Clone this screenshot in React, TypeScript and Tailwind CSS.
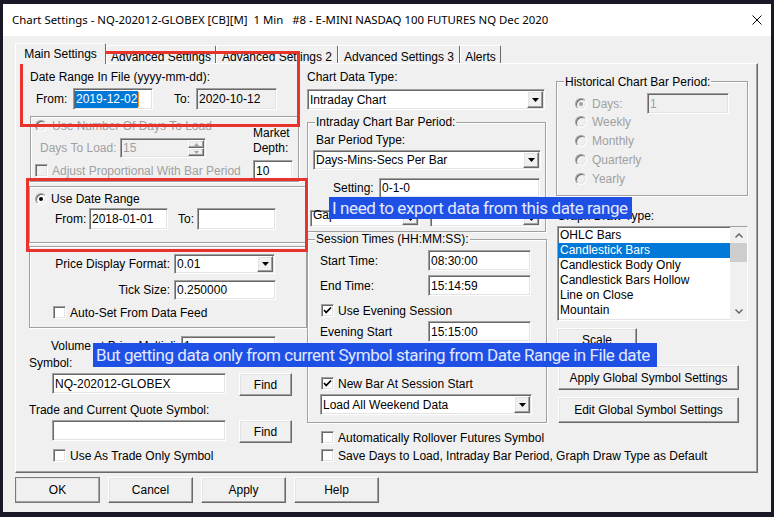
import React from "react";

const sunken =
  "border border-t-[#a0a0a0] border-l-[#a0a0a0] border-r-white border-b-white shadow-[inset_1px_1px_0_#696969,inset_-1px_-1px_0_#e3e3e3]";
const raised =
  "border border-t-white border-l-white border-r-[#696969] border-b-[#696969] shadow-[inset_-1px_-1px_0_#a0a0a0,inset_1px_1px_0_#e3e3e3] bg-[#f0f0f0]";
const etched = "border border-[#a0a0a0] shadow-[inset_1px_1px_0_#ffffff,1px_1px_0_#ffffff]";
const grayText = "text-[#a0a0a0]";

function TextBox({ cls, value = "", gray = false, dim = false }: { cls: string; value?: string; gray?: boolean; dim?: boolean }) {
  return (
    <div
      className={`${sunken} ${cls} ${gray ? "bg-[#f0f0f0]" : "bg-white"} ${dim ? grayText : ""} shrink-0 flex items-center pl-[2px] overflow-hidden whitespace-nowrap`}
    >
      {value}
    </div>
  );
}

function Arrow({ color = "#000" }: { color?: string }) {
  return (
    <svg width="7" height="4" viewBox="0 0 7 4">
      <polygon points="0,0 7,0 3.5,4" fill={color} />
    </svg>
  );
}

function Combo({ cls, value = "", textCls = "items-center" }: { cls: string; value?: string; textCls?: string }) {
  return (
    <div className={`${sunken} ${cls} bg-white shrink-0 flex items-stretch`}>
      <div className={`flex-1 flex ${textCls} pl-[2px] overflow-hidden whitespace-nowrap`}>{value}</div>
      <div className={`${raised} w-[16px] my-[1px] mr-[1px] flex items-center justify-center`}>
        <Arrow />
      </div>
    </div>
  );
}

function Button({ cls, children }: { cls: string; children: React.ReactNode }) {
  return <div className={`${raised} ${cls} shrink-0 flex items-center justify-center whitespace-nowrap`}>{children}</div>;
}

function Check({ checked = false, disabled = false }: { checked?: boolean; disabled?: boolean }) {
  return (
    <div className={`${sunken} w-[13px] h-[13px] shrink-0 ${disabled ? "bg-[#f0f0f0]" : "bg-white"} flex items-center justify-center`}>
      {checked && (
        <svg width="9" height="9" viewBox="0 0 9 9">
          <polyline points="1,4 3.2,6.5 8,1.5" fill="none" stroke="#000" strokeWidth="1.8" />
        </svg>
      )}
    </div>
  );
}

function Radio({ checked = false, disabled = false }: { checked?: boolean; disabled?: boolean }) {
  return (
    <div
      className={`w-[12px] h-[12px] shrink-0 rounded-full border border-t-[#a0a0a0] border-l-[#a0a0a0] border-r-white border-b-white shadow-[inset_1px_1px_0_#696969,inset_-1px_-1px_0_#e3e3e3] ${disabled ? "bg-[#f0f0f0]" : "bg-white"} flex items-center justify-center`}
    >
      {checked && <div className={`w-[4px] h-[4px] rounded-full ${disabled ? "bg-[#a0a0a0]" : "bg-black"}`} />}
    </div>
  );
}

function Legend({ cls = "-mt-[8px]", children }: { cls?: string; children: React.ReactNode }) {
  return <div className={`${cls} ml-[7px] px-[1px] h-[14px] w-fit bg-[#f0f0f0] whitespace-nowrap`}>{children}</div>;
}

function Chevron({ up }: { up?: boolean }) {
  return (
    <svg width="8" height="5" viewBox="0 0 8 5">
      <polyline points={up ? "0.5,4.5 4,1 7.5,4.5" : "0.5,0.5 4,4 7.5,0.5"} fill="none" stroke="#606060" strokeWidth="1.4" />
    </svg>
  );
}

const drawTypes = ["OHLC Bars", "Candlestick Bars", "Candlestick Body Only", "Candlestick Bars Hollow", "Line on Close", "Mountain"];

export default function App() {
  return (
    <div className="relative w-[774px] h-[517px] overflow-hidden bg-[#181826] pl-[3px] pt-[4px] font-['Liberation_Sans',Arial,sans-serif] text-[12px] leading-[14px] text-black">
      <div className="w-[768px] h-[508px] bg-[#f0f0f0] flex flex-col">
        {/* title bar */}
        <div className="h-[32px] shrink-0 bg-white flex items-center pl-[9px] pr-[9px]">
          <span className="font-['Noto_Sans',sans-serif] text-[11.4px] whitespace-pre">
            Chart Settings - NQ-202012-GLOBEX [CB][M]  1 Min   #8 - E-MINI NASDAQ 100 FUTURES NQ Dec 2020
          </span>
          <svg className="ml-auto" width="10" height="10" viewBox="0 0 10 10">
            <path d="M0.5 0.5L9.5 9.5M9.5 0.5L0.5 9.5" stroke="#000" strokeWidth="1" />
          </svg>
        </div>

        <div className="flex-1 pl-[12px] pt-[7px]">
          {/* tabs */}
          <div className="h-[20px] flex items-end">
            <div className="relative z-10 -mb-[1px] w-[91px] h-[21px] bg-[#f0f0f0] border-l border-t border-r border-l-white border-t-white border-r-[#696969] rounded-t-[2px] flex justify-center pt-[3px]">
              Main Settings
            </div>
            <div className="w-[110px] h-[18px] border-l border-t border-r border-l-white border-t-white border-r-[#696969] rounded-t-[2px] flex justify-center pt-[4px]">
              Advanced Settings
            </div>
            <div className="w-[122px] h-[18px] border-l border-t border-r border-l-white border-t-white border-r-[#696969] rounded-t-[2px] flex justify-center pt-[4px]">
              Advanced Settings 2
            </div>
            <div className="w-[122px] h-[18px] border-l border-t border-r border-l-white border-t-white border-r-[#696969] rounded-t-[2px] flex justify-center pt-[4px]">
              Advanced Settings 3
            </div>
            <div className="w-[41px] h-[18px] border-l border-t border-r border-l-white border-t-white border-r-[#696969] rounded-t-[2px] flex justify-center pt-[4px]">
              Alerts
            </div>
          </div>

          {/* tab page */}
          <div className="w-[743px] h-[410px] bg-[#f0f0f0] border border-t-white border-l-white border-r-[#696969] border-b-[#696969] shadow-[inset_-1px_-1px_0_#a0a0a0] flex items-start">
            {/* left column */}
            <div className="ml-[13px] w-[278px] shrink-0 flex flex-col">
              <div className="mt-[6px] ml-[1px] h-[14px]">Date Range In File (yyyy-mm-dd):</div>
              <div className="mt-[4px] h-[22px] flex items-center">
                <span className="ml-[7px] w-[37px]">From:</span>
                <div className={`${sunken} w-[80px] h-[22px] bg-white shrink-0 flex items-center pl-[1px]`}>
                  <span className="bg-[#0078d7] text-white px-[1px] leading-[17px]">2019-12-02</span>
                  <span className="w-[1px] h-[15px] bg-[#e8902a]" />
                </div>
                <span className="ml-[21px] w-[22px]">To:</span>
                <TextBox cls="w-[81px] h-[22px]" gray value="2020-10-12" />
              </div>

              <div className={`mt-[6px] ml-[1px] w-[269px] h-[66px] ${etched} flex`}>
                <div className="w-[222px] shrink-0 flex flex-col">
                  <div className="mt-[2px] h-[13px] pl-[4px] flex items-center">
                    <Radio disabled />
                    <span className={`ml-[5px] ${grayText}`}>Use Number Of Days To Load</span>
                  </div>
                  <div className="mt-[6px] h-[20px] pl-[9px] flex items-center">
                    <span className={`w-[80px] ${grayText}`}>Days To Load:</span>
                    <div className={`${sunken} w-[86px] h-[20px] bg-[#f0f0f0] flex items-stretch`}>
                      <div className={`flex-1 pl-[2px] flex items-center ${grayText}`}>15</div>
                      <div className="w-[16px] my-[1px] mr-[1px] flex flex-col">
                        <div className={`${raised} flex-1 flex items-center justify-center`}>
                          <svg width="5" height="3" viewBox="0 0 5 3"><polygon points="0,3 5,3 2.5,0" fill="#a0a0a0" /></svg>
                        </div>
                        <div className={`${raised} flex-1 flex items-center justify-center`}>
                          <svg width="5" height="3" viewBox="0 0 5 3"><polygon points="0,0 5,0 2.5,3" fill="#a0a0a0" /></svg>
                        </div>
                      </div>
                    </div>
                  </div>
                  <div className="mt-[6px] h-[13px] pl-[4px] flex items-center">
                    <Check disabled />
                    <span className={`ml-[4px] whitespace-nowrap ${grayText}`}>Adjust Proportional With Bar Period</span>
                  </div>
                </div>
                <div className="flex flex-col">
                  <div className="mt-[9px] leading-[15px]">
                    Market
                    <br />
                    Depth:
                  </div>
                  <TextBox cls="mt-[4px] w-[40px] h-[21px]" value="10" />
                </div>
              </div>

              <div className={`mt-[4px] w-[278px] h-[57px] ${etched} flex flex-col`}>
                <div className="mt-[5px] h-[13px] pl-[5px] flex items-center">
                  <Radio checked />
                  <span className="ml-[4px]">Use Date Range</span>
                </div>
                <div className="mt-[3px] h-[22px] flex items-center">
                  <span className="ml-[25px] w-[34px]">From:</span>
                  <TextBox cls="w-[79px] h-[22px]" value="2018-01-01" />
                  <span className="ml-[10px] w-[19px]">To:</span>
                  <TextBox cls="w-[79px] h-[22px]" />
                </div>
              </div>

              <div className={`mt-[3px] w-[278px] h-[82px] ${etched} flex flex-col`}>
                <div className="mt-[7px] h-[20px] flex items-center">
                  <span className="w-[140px] text-right">Price Display Format:</span>
                  <Combo cls="ml-[4px] w-[101px] h-[20px]" value="0.01" />
                </div>
                <div className="mt-[6px] h-[20px] flex items-center">
                  <span className="w-[140px] text-right">Tick Size:</span>
                  <TextBox cls="ml-[4px] w-[102px] h-[20px]" value="0.250000" />
                </div>
                <div className="mt-[6px] h-[13px] pl-[23px] flex items-center">
                  <Check />
                  <span className="ml-[4px]">Auto-Set From Data Feed</span>
                </div>
              </div>

              <div className="mt-[8px] h-[20px] flex items-center">
                <span className="ml-[22px] w-[130px] overflow-hidden whitespace-nowrap">Volume at Price Multiplier:</span>
                <TextBox cls="w-[95px] h-[20px]" value="1" />
              </div>
              <div className="h-[14px]">Symbol:</div>
              <div className="mt-[3px] flex items-start">
                <TextBox cls="ml-[23px] w-[174px] h-[21px]" value="NQ-202012-GLOBEX" />
                <Button cls="ml-[13px] w-[53px] h-[23px]">Find</Button>
              </div>
              <div className="mt-[7px] h-[14px]">Trade and Current Quote Symbol:</div>
              <div className="mt-[3px] flex items-start">
                <TextBox cls="ml-[23px] w-[174px] h-[21px]" />
                <Button cls="ml-[13px] w-[53px] h-[23px]">Find</Button>
              </div>
              <div className="mt-[6px] h-[13px] pl-[24px] flex items-center">
                <Check />
                <span className="ml-[4px]">Use As Trade Only Symbol</span>
              </div>
            </div>

            {/* middle column */}
            <div className="w-[240px] shrink-0 flex flex-col">
              <div className="mt-[6px] h-[14px]">Chart Data Type:</div>
              <Combo cls="mt-[5px] w-[238px] h-[21px]" value="Intraday Chart" />

              <div className={`mt-[12px] w-[239px] h-[110px] ${etched} flex flex-col`}>
                <Legend>Intraday Chart Bar Period:</Legend>
                <div className="mt-[4px] ml-[8px] h-[14px]">Bar Period Type:</div>
                <Combo cls="mt-[3px] ml-[5px] w-[228px] h-[20px]" value="Days-Mins-Secs Per Bar" />
                <div className="mt-[8px] h-[20px] flex items-center">
                  <span className="ml-[25px] w-[46px]">Setting:</span>
                  <TextBox cls="w-[161px] h-[20px]" value="0-1-0" />
                </div>
                <div className="mt-[12px] h-[17px] flex">
                  <Combo cls="ml-[2px] w-[110px] h-[17px]" textCls="items-start -mt-[2px] leading-[12px]" value="Gaps Not Filled" />
                  <Combo cls="ml-[10px] w-[111px] h-[17px]" />
                </div>
              </div>

              <div className={`mt-[7px] w-[240px] h-[184px] ${etched} flex flex-col`}>
                <Legend>Session Times (HH:MM:SS):</Legend>
                <div className="mt-[4px] h-[21px] flex items-center">
                  <span className="ml-[12px] w-[108px]">Start Time:</span>
                  <TextBox cls="w-[103px] h-[21px]" value="08:30:00" />
                </div>
                <div className="mt-[4px] h-[21px] flex items-center">
                  <span className="ml-[12px] w-[108px]">End Time:</span>
                  <TextBox cls="w-[103px] h-[21px]" value="15:14:59" />
                </div>
                <div className="mt-[8px] h-[13px] pl-[13px] flex items-center">
                  <Check checked />
                  <span className="ml-[4px]">Use Evening Session</span>
                </div>
                <div className="mt-[4px] h-[21px] flex items-center">
                  <span className="ml-[12px] w-[108px]">Evening Start</span>
                  <TextBox cls="w-[103px] h-[21px]" value="15:15:00" />
                </div>
                <div className="mt-[4px] h-[21px] flex items-center">
                  <span className="ml-[12px] w-[108px]">Evening End</span>
                  <TextBox cls="w-[103px] h-[21px]" value="08:29:59" />
                </div>
                <div className="mt-[10px] h-[13px] pl-[13px] flex items-center">
                  <Check checked />
                  <span className="ml-[4px]">New Bar At Session Start</span>
                </div>
                <Combo cls="mt-[4px] ml-[12px] w-[212px] h-[21px]" value="Load All Weekend Data" />
              </div>

              <div className="mt-[8px] h-[13px] pl-[14px] flex items-center">
                <Check />
                <span className="ml-[4px] whitespace-nowrap">Automatically Rollover Futures Symbol</span>
              </div>
              <div className="mt-[5px] h-[13px] pl-[14px] flex items-center">
                <Check />
                <span className="ml-[4px] whitespace-nowrap">Save Days to Load, Intraday Bar Period, Graph Draw Type as Default</span>
              </div>
            </div>

            {/* right column */}
            <div className="ml-[9px] w-[192px] shrink-0 flex flex-col">
              <div className={`mt-[17px] w-[192px] h-[115px] ${etched} flex flex-col`}>
                <Legend cls="-mt-[7px]">Historical Chart Bar Period:</Legend>
                <div className="mt-[4px] h-[21px] pl-[18px] flex items-center">
                  <Radio checked disabled />
                  <span className={`ml-[5px] w-[55px] ${grayText}`}>Days:</span>
                  <TextBox cls="w-[82px] h-[21px]" gray dim value="1" />
                </div>
                {["Weekly", "Monthly", "Quarterly", "Yearly"].map((p, i) => (
                  <div key={p} className={`${i === 0 ? "mt-[1px]" : "mt-[6px]"} h-[13px] pl-[18px] flex items-center`}>
                    <Radio disabled />
                    <span className={`ml-[5px] ${grayText}`}>{p}</span>
                  </div>
                ))}
              </div>

              <div className="mt-[13px] ml-[1px] h-[14px]">Graph Draw Type:</div>
              <div className={`mt-[3px] ml-[1px] w-[191px] h-[95px] bg-white ${sunken} flex`}>
                <div className="flex-1 pt-[1px] flex flex-col">
                  {drawTypes.map((d) => (
                    <div
                      key={d}
                      className={`h-[15px] leading-[15px] pl-[2px] whitespace-nowrap ${d === "Candlestick Bars" ? "bg-[#0078d7] text-white" : ""}`}
                    >
                      {d}
                    </div>
                  ))}
                </div>
                <div className="w-[17px] pt-[1px] pb-[1px] bg-[#f0f0f0] flex flex-col">
                  <div className="h-[15px] flex items-center justify-center">
                    <Chevron up />
                  </div>
                  <div className="h-[19px] bg-[#cdcdcd]" />
                  <div className="flex-1" />
                  <div className="h-[15px] flex items-center justify-center">
                    <Chevron />
                  </div>
                </div>
              </div>

              <Button cls="mt-[7px] ml-[1px] w-[80px] h-[24px]">Scale</Button>
              <Button cls="mt-[13px] ml-[2px] w-[181px] h-[25px]">Apply Global Symbol Settings</Button>
              <Button cls="mt-[7px] ml-[2px] w-[181px] h-[26px]">Edit Global Symbol Settings</Button>
            </div>
          </div>

          {/* dialog buttons */}
          <div className="mt-[4px] flex gap-[8px]">
            <Button cls="w-[85px] h-[26px] outline outline-1 outline-[#7a7a7a] -outline-offset-1">OK</Button>
            <Button cls="w-[85px] h-[26px]">Cancel</Button>
            <Button cls="w-[85px] h-[26px]">Apply</Button>
            <Button cls="w-[85px] h-[26px]">Help</Button>
          </div>
        </div>
      </div>

      {/* annotations */}
      <div className="absolute left-[20px] top-[51px] w-[280px] h-[76px] border-[3px] border-[#e8322c]" />
      <div className="absolute left-[26px] top-[178px] w-[282px] h-[74px] border-[3px] border-[#e8322c]" />
      <div className="absolute left-[329px] top-[197px] w-[303px] h-[22px] bg-[#1f50e6] text-[#e2e8ff] pl-[3px] flex items-center whitespace-nowrap overflow-hidden font-['Roboto',sans-serif] text-[17px] tracking-[-0.4px]">
        I need to export data from this date range
      </div>
      <div className="absolute left-[93px] top-[343px] w-[564px] h-[24px] bg-[#1f50e6] text-[#e2e8ff] pl-[3px] flex items-center whitespace-nowrap overflow-hidden font-['Roboto',sans-serif] text-[17px] tracking-[-0.45px]">
        But getting data only from current Symbol staring from Date Range in File date
      </div>
    </div>
  );
}
